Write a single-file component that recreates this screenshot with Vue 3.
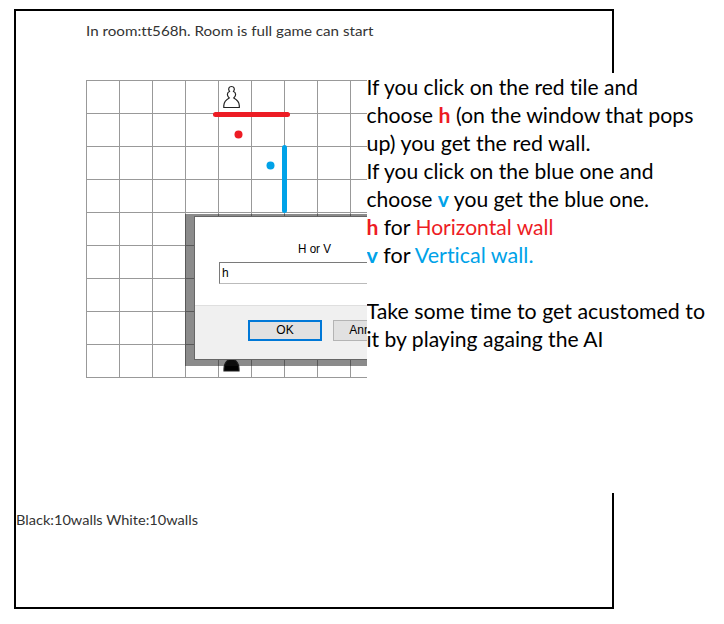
<script setup>
const lineAt = Array.from({ length: 10 }, (_, i) => i * 33 + 0.5)

const note = [
  { y: 22, w: 271.5, parts: [{ t: 'If you click on the red tile and' }] },
  { y: 50, w: 327, parts: [{ t: 'choose ' }, { t: 'h', c: 'red bold' }, { t: ' (on the window that pops' }] },
  { y: 78, w: 224, parts: [{ t: 'up) you get the red wall.' }] },
  { y: 106, w: 287, parts: [{ t: 'If you click on the blue one and' }] },
  { y: 134, w: 282.5, parts: [{ t: 'choose ' }, { t: 'v', c: 'blue bold' }, { t: ' you get the blue one.' }] },
  { y: 162, w: 187, parts: [{ t: 'h', c: 'red bold' }, { t: ' for ' }, { t: 'Horizontal wall', c: 'red' }] },
  { y: 190, w: 167, parts: [{ t: 'v', c: 'blue bold' }, { t: ' for ' }, { t: 'Vertical wall.', c: 'blue' }] },
  { y: 246, w: 338.5, parts: [{ t: 'Take some time to get acustomed to' }] },
  { y: 274, w: 237, parts: [{ t: 'it by playing againg the AI' }] },
]
</script>

<template>
  <main class="page">
    <section class="room">
      <svg class="status" width="400" height="24">
        <text x="0" y="17" textLength="287.5" lengthAdjust="spacingAndGlyphs">In room:tt568h. Room is full game can start</text>
      </svg>
      <div class="board">
        <svg class="grid" width="298" height="298">
          <g class="lines">
            <path v-for="p in lineAt" :key="'h' + p" :d="`M0 ${p}H298`" />
            <path v-for="p in lineAt" :key="'v' + p" :d="`M${p} 0V298`" />
          </g>
          <path class="pawn" d="M137.8 27.5V25.5C138 21.5 140.500 19.500 143.200 18C140.500 15.500 141 12.500 143.500 11.500C141.700 9 143 6.500 145.500 6.500S149.300 9 147.500 11.500C150 12.500 150.500 15.500 147.800 18C150.500 19.500 153.200 21.500 153.300 25.500V27.500Z" />
          <path class="pawn black" d="M138 291V289C138 284 140.500 281 143 279.500H148C150.500 281 153 284 153 289V291Z" />
          <path class="wall red" d="M129.500 34.500H201.500" />
          <path class="wall blue" d="M198.500 67.500V130.500" />
          <circle class="red-dot" cx="152.500" cy="54.500" r="4" />
          <circle class="blue-dot" cx="184.500" cy="85.500" r="4" />
        </svg>
        <div class="shade">
          <div class="dialog">
            <div class="body">
              <svg class="caption" width="60" height="18">
                <text x="0" y="13" textLength="33" lengthAdjust="spacingAndGlyphs">H or V</text>
              </svg>
              <div class="field">h</div>
            </div>
            <div class="actions">
              <div class="button primary">OK</div>
              <div class="button">Annuler</div>
            </div>
          </div>
        </div>
      </div>
      <svg class="score" width="300" height="24">
        <text x="0" y="16" textLength="182" lengthAdjust="spacingAndGlyphs">Black:10walls White:10walls</text>
      </svg>
    </section>
    <aside class="note">
      <svg width="357" height="420">
        <text v-for="l in note" :key="l.y" x="-0.500" :y="l.y" :textLength="l.w" lengthAdjust="spacingAndGlyphs"><tspan v-for="(p, i) in l.parts" :key="i" :class="p.c">{{ p.t }}</tspan></text>
      </svg>
    </aside>
  </main>
</template>

<style>
body {
  background: #fff;
}
</style>

<style scoped>
.page {
  position: relative;
  box-sizing: border-box;
  width: 724px;
  height: 624px;
  padding: 9px 0 0 14px;
  overflow: hidden;
  font-variant-ligatures: none;
}
.room {
  box-sizing: border-box;
  width: 600px;
  height: 600px;
  border: 2px solid #000;
}
svg {
  display: block;
}
text {
  white-space: pre;
  font-variant-ligatures: none;
}
.status,
.score {
  font-family: Lato, sans-serif;
  font-size: 14px;
  fill: #333;
}
.status {
  margin: 8px 0 0 70px;
}
.board {
  position: relative;
  width: 298px;
  height: 298px;
  margin: 37px 0 0 70px;
}
.score {
  margin-top: 131px;
}
.lines {
  stroke: #999;
  fill: none;
}
.pawn {
  fill: #fff;
  stroke: #222;
  stroke-width: 1.2;
}
.black {
  fill: #000;
}
.wall {
  fill: none;
  stroke-width: 5;
  stroke-linecap: round;
}
.wall.red {
  stroke: #ed1c24;
}
.wall.blue {
  stroke: #00a2e8;
}
.red-dot {
  fill: #ed1c24;
}
.blue-dot {
  fill: #00a2e8;
}
.shade {
  position: absolute;
  left: 99px;
  top: 134px;
  box-sizing: border-box;
  width: 199px;
  height: 152px;
  padding: 2px 0 0 9px;
  overflow: hidden;
  background: rgba(24, 24, 24, 0.5);
}
.dialog {
  box-sizing: border-box;
  width: 280px;
  height: 144px;
  border: 1px solid #666;
  background: #fff;
  font: 12px/14px "Liberation Sans", sans-serif;
  color: #000;
}
.body {
  box-sizing: border-box;
  height: 88px;
  padding-top: 23px;
}
.caption {
  margin-left: 103px;
}
.field {
  box-sizing: border-box;
  width: 240px;
  height: 22px;
  margin: 4px 0 0 24px;
  padding: 3px 2px;
  border: 1px solid #7a7a7a;
  border-bottom-color: #bbb;
}
.actions {
  display: flex;
  gap: 11px;
  box-sizing: border-box;
  height: 54px;
  padding: 14px 0 0 53px;
  border-top: 1px solid #dfdfdf;
  background: #f0f0f0;
}
.button {
  box-sizing: border-box;
  width: 74px;
  height: 21px;
  border: 1px solid #b4b4b4;
  background: #e1e1e1;
  line-height: 19px;
  text-align: center;
}
.primary {
  border: 2px solid #0078d7;
  line-height: 17px;
}
.note {
  position: absolute;
  left: 367px;
  top: 73px;
  width: 357px;
  height: 420px;
  background: #fff;
}
.note text {
  font-family: Lato, sans-serif;
  font-size: 21px;
}
.note .red {
  fill: #ed1c24;
}
.note .blue {
  fill: #00a2e8;
}
.note .bold {
  font-weight: 700;
}
</style>
